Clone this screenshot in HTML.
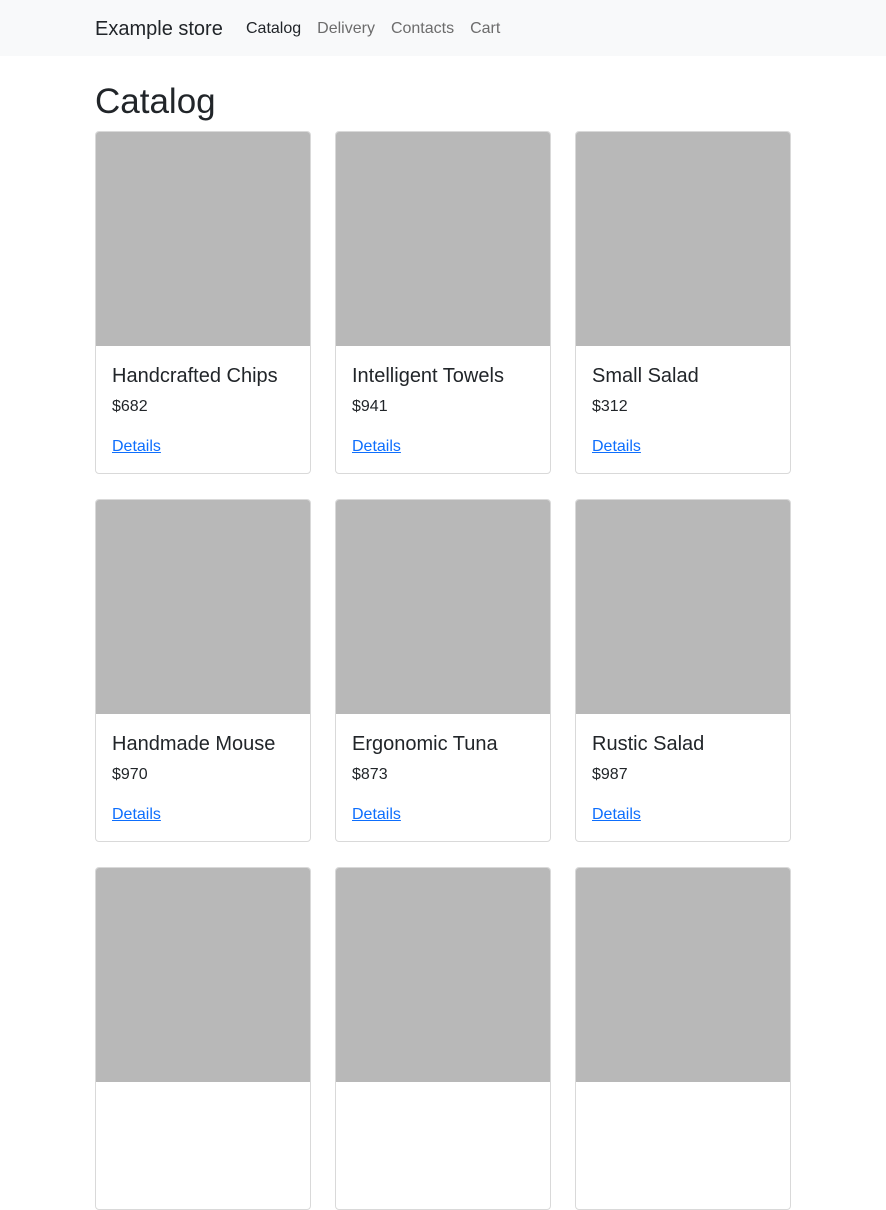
<!DOCTYPE html>
<html><head><meta charset="utf-8"><style>
*{box-sizing:border-box;margin:0;padding:0}
html,body{width:886px;height:979px;overflow:hidden}
body{background:#fff;font-family:"Liberation Sans",sans-serif;color:#212529}
nav{height:56px;background:#f8f9fa;position:relative}
.brand{position:absolute;left:95px;top:18px;font-size:20px;color:#212529}
.links{position:absolute;left:246px;top:20px;font-size:16px}
.links span{margin-right:16px;color:#6c6c6c}
.links span.a{color:#212529}
h1{position:absolute;left:95px;top:82px;font-size:35px;font-weight:400}
.card{position:absolute;width:216px;height:343px;border:1px solid rgba(0,0,0,.15);border-radius:4px;overflow:hidden}
.img{width:214px;height:214px;background:#b8b8b8}
.t{position:absolute;left:16px;top:233px;font-size:20px}
.p{position:absolute;left:16px;top:266px;font-size:16px}
.d{position:absolute;left:16px;top:306px;font-size:16px;color:#0d6efd;text-decoration:underline}
</style></head><body>
<nav><div class="brand">Example store</div><div class="links"><span class="a">Catalog</span><span>Delivery</span><span>Contacts</span><span>Cart</span></div></nav>
<h1>Catalog</h1>
<div class="card" style="left:95px;top:131px"><div class="img"></div><div class="t">Handcrafted Chips</div><div class="p">$682</div><div class="d">Details</div></div>
<div class="card" style="left:335px;top:131px"><div class="img"></div><div class="t">Intelligent Towels</div><div class="p">$941</div><div class="d">Details</div></div>
<div class="card" style="left:575px;top:131px"><div class="img"></div><div class="t">Small Salad</div><div class="p">$312</div><div class="d">Details</div></div>
<div class="card" style="left:95px;top:499px"><div class="img"></div><div class="t">Handmade Mouse</div><div class="p">$970</div><div class="d">Details</div></div>
<div class="card" style="left:335px;top:499px"><div class="img"></div><div class="t">Ergonomic Tuna</div><div class="p">$873</div><div class="d">Details</div></div>
<div class="card" style="left:575px;top:499px"><div class="img"></div><div class="t">Rustic Salad</div><div class="p">$987</div><div class="d">Details</div></div>
<div class="card" style="left:95px;top:867px"><div class="img"></div></div>
<div class="card" style="left:335px;top:867px"><div class="img"></div></div>
<div class="card" style="left:575px;top:867px"><div class="img"></div></div>
</body></html>
